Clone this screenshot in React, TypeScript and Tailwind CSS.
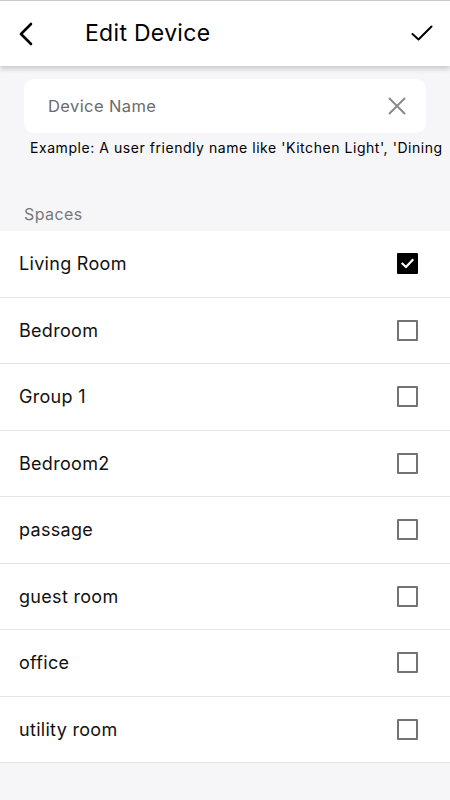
import React from "react";

const rooms = [
  { name: "Living Room", checked: true },
  { name: "Bedroom", checked: false },
  { name: "Group 1", checked: false },
  { name: "Bedroom2", checked: false },
  { name: "passage", checked: false },
  { name: "guest room", checked: false },
  { name: "office", checked: false },
  { name: "utility room", checked: false },
];

function Checkbox({ checked }: { checked: boolean }) {
  if (checked) {
    return (
      <div className="w-[21px] h-[21px] bg-black rounded-[1px] flex items-center justify-center">
        <svg width="15" height="15" viewBox="0 0 15 15" fill="none">
          <path d="M2.5 7.8 L6 11 L12.5 4" stroke="#fff" strokeWidth="2.2" strokeLinecap="square" />
        </svg>
      </div>
    );
  }
  return <div className="w-[21px] h-[21px] border-2 border-[#737373] rounded-[1px]" />;
}

export default function App() {
  return (
    <div
      className="w-[450px] h-[800px] bg-[#f6f6f8] overflow-hidden flex flex-col"
      style={{ fontFamily: "Inter, 'Noto Sans', sans-serif" }}
    >
      <div className="relative z-10 h-[66px] bg-white border-t border-[#c8c8c8] shadow-[0_3px_5px_rgba(0,0,0,0.18)] flex items-center shrink-0">
        <div className="w-[85px] pl-[18px] flex items-center">
          <svg width="16" height="24" viewBox="0 0 16 24" fill="none">
            <path d="M13 2 L3 12 L13 22" stroke="#000" strokeWidth="2.6" strokeLinecap="round" strokeLinejoin="round" />
          </svg>
        </div>
        <div className="flex-1 text-[23px] text-black font-normal tracking-[0.3px]">Edit Device</div>
        <div className="pr-[17px]">
          <svg width="22" height="18" viewBox="0 0 22 18" fill="none">
            <path d="M1.5 9 L7.5 14.5 L20.5 1.5" stroke="#000" strokeWidth="2" strokeLinecap="round" strokeLinejoin="round" />
          </svg>
        </div>
      </div>

      <div className="px-[24px] pt-[13px]">
        <div className="h-[54px] bg-white rounded-[10px] flex items-center pl-[24px] pr-[20px]">
          <div className="flex-1 text-[16.5px] text-[#6b6b6b] tracking-[0.4px]">Device Name</div>
          <svg width="18" height="18" viewBox="0 0 18 18" fill="none">
            <path d="M1.5 1.5 L16.5 16.5 M16.5 1.5 L1.5 16.5" stroke="#8a8a8a" strokeWidth="2" strokeLinecap="round" />
          </svg>
        </div>
      </div>
      <div className="pl-[30px] pt-[5px] text-[14px] text-black whitespace-nowrap leading-[20px] tracking-[0.55px]">
        Example: A user friendly name like 'Kitchen Light', 'Dining
      </div>

      <div className="pl-[24px] pt-[46px] pb-[7px] text-[16px] text-[#787878] leading-[20px] tracking-[0.4px]">Spaces</div>

      <div className="bg-white">
        {rooms.map((r) => (
          <div
            key={r.name}
            className="h-[66.5px] flex items-center pl-[19px] pr-[32px] border-b border-[#e4e4e6]"
          >
            <div className="flex-1 text-[18px] text-[#111] tracking-[0.3px]">{r.name}</div>
            <Checkbox checked={r.checked} />
          </div>
        ))}
      </div>
    </div>
  );
}
